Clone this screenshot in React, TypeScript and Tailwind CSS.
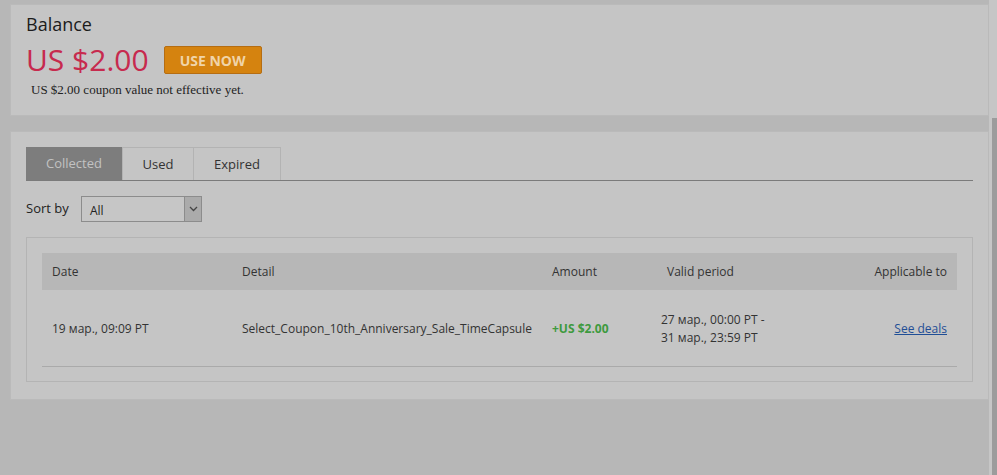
// Coupon balance page, dimmed behind a modal backdrop

import React from "react";

const font = { fontFamily: '"Open Sans", "Noto Sans", sans-serif' };

function Tabs() {
  return (
    <div className="flex border-b border-[#7b7b7b]">
      <div className="w-[96px] h-[33px] flex items-center justify-center bg-[#7d7d7d] text-[#c2c2c2] text-[13px] pt-[1px]">
        Collected
      </div>
      <div className="w-[72px] h-[33px] flex items-center justify-center border border-b-0 border-[#b3b3b3] text-[#333] text-[13px] pt-[1px]">
        Used
      </div>
      <div className="w-[87px] h-[33px] flex items-center justify-center border border-b-0 border-l-0 border-[#b3b3b3] text-[#333] text-[13px] pt-[1px]">
        Expired
      </div>
    </div>
  );
}

function SortBy() {
  return (
    <div className="flex items-center mt-[15px]">
      <span className="text-[13px] text-[#222] w-[55px]">Sort by</span>
      <div className="flex w-[121px] h-[26px] border border-[#8c8c8c] bg-[#c6c6c6]">
        <span className="flex-1 text-[12px] text-[#222] pl-[8px] pt-[8px] leading-none">All</span>
        <div className="w-[17px] bg-[#ababab] border-l border-[#8c8c8c] flex items-center justify-center">
          <svg width="9" height="6" viewBox="0 0 9 6">
            <path d="M1 1 L4.5 4.5 L8 1" fill="none" stroke="#444" strokeWidth="1.3" />
          </svg>
        </div>
      </div>
    </div>
  );
}

function CouponTable() {
  return (
    <div className="mt-[15px] border border-[#b4b4b4] px-[15px] pt-[15px] pb-[14px]">
      <div className="grid grid-cols-[190px_310px_115px_1fr_160px] h-[37px] items-center bg-[#b7b7b7] text-[12px] text-[#333]">
        <span className="pl-[10px]">Date</span>
        <span className="pl-[10px]">Detail</span>
        <span className="pl-[10px]">Amount</span>
        <span className="pl-[10px]">Valid period</span>
        <span className="text-right pr-[10px]">Applicable to</span>
      </div>
      <div className="grid grid-cols-[190px_310px_115px_1fr_160px] h-[77px] items-center border-b border-[#aaaaaa] text-[12px] text-[#333]">
        <span className="pl-[10px] pt-[2px]">19 мар., 09:09 PT</span>
        <span className="pl-[10px] pt-[2px]">Select_Coupon_10th_Anniversary_Sale_TimeCapsule</span>
        <span className="pl-[10px] pt-[2px] font-bold text-[#3e9a3e]">+US $2.00</span>
        <span className="pl-[4px] pt-[2px] leading-[18px]">
          27 мар., 00:00 PT -<br />
          31 мар., 23:59 PT
        </span>
        <span className="text-right pr-[10px] pt-[2px]">
          <a className="text-[#1f4e96] underline cursor-pointer">See deals</a>
        </span>
      </div>
    </div>
  );
}

export default function App() {
  return (
    <div className="h-screen w-full bg-[#b7b7b7] flex overflow-hidden" style={font}>
      <div className="flex-1 pl-[10px] pt-[4px]">
        <div className="h-[112px] bg-[#c5c5c5] border border-[#bababa] px-[15px] pt-[7px]">
          <div className="text-[18px] text-[#1c1c1c] leading-[24px]">Balance</div>
          <div className="flex items-center mt-[6px]">
            <span className="text-[30px] leading-[36px] text-[#c72a4e]">US $2.00</span>
            <button className="ml-[15px] w-[98px] h-[28px] bg-[#d5830f] border border-[#b56d12] rounded-[2px] text-[#f0d4a8] text-[14px] font-bold">
              USE NOW
            </button>
          </div>
          <div
            className="text-[13px] text-[#222] pl-[5px] mt-[2px]"
            style={{ fontFamily: '"Liberation Serif", serif' }}
          >
            US $2.00 coupon value not effective yet.
          </div>
        </div>
        <div className="mt-[15px] h-[269px] bg-[#c5c5c5] border border-[#bababa] px-[15px] pt-[15px]">
          <Tabs />
          <SortBy />
          <CouponTable />
        </div>
      </div>
      <div className="w-[8px] flex">
        <div className="w-[3px] bg-[#c6c6c6]" />
        <div className="flex-1 flex flex-col">
          <div className="h-[118px] bg-[#c6c6c6]" />
          <div className="flex-1 bg-[#9c9c9c]" />
        </div>
      </div>
    </div>
  );
}
